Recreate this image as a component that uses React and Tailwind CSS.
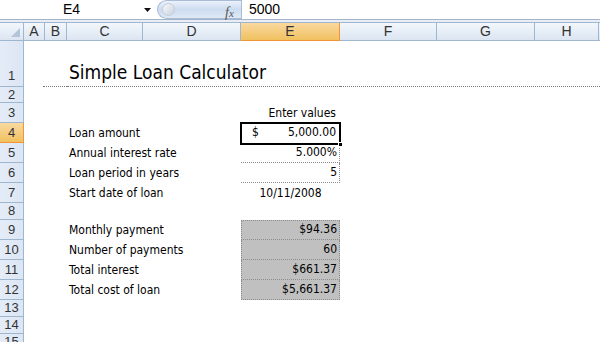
import React from 'react'

const cols = [
  { id: 'A', w: 'w-[21px]' },
  { id: 'B', w: 'w-[22px]' },
  { id: 'C', w: 'w-[76px]' },
  { id: 'D', w: 'w-[98px]' },
  { id: 'E', w: 'w-[99px]' },
  { id: 'F', w: 'w-[97px]' },
  { id: 'G', w: 'w-[98px]' },
  { id: 'H', w: 'w-[64px]' },
]

const rowHeights = {
  1: 'h-[46px]',
  2: 'h-[16px]',
  8: 'h-[17px]',
  13: 'h-[17px]',
  14: 'h-[17px]',
  15: 'h-[17px]',
}

const inputs = {
  4: { label: 'Loan amount' },
  5: { label: 'Annual interest rate', value: '5.000%' },
  6: { label: 'Loan period in years', value: '5' },
  7: { label: 'Start date of loan', value: '10/11/2008' },
  9: { label: 'Monthly payment', value: '$94.36' },
  10: { label: 'Number of payments', value: '60' },
  11: { label: 'Total interest', value: '$661.37' },
  12: { label: 'Total cost of loan', value: '$5,661.37' },
}

const cellFont = "font-['DejaVu_Sans_Condensed','DejaVu_Sans',sans-serif]"

function ValueCell({ row }) {
  const item = inputs[row]
  if (row === 3) {
    return (
      <div className="w-[99px] h-full flex items-end justify-end pr-[4px] pb-[1px] text-[12px]">
        Enter values
      </div>
    )
  }
  if (row === 4) {
    return (
      <div className="relative w-[99px] h-full">
        <div className="absolute left-[-1px] top-[-1px] right-[-1px] bottom-[-2px] border-2 border-black flex items-end justify-between px-[10px] pb-[2px] text-[12px] z-10">
          <span>$</span>
          <span className="-mr-[7px]">5,000.00</span>
        </div>
        <div className="absolute right-[-3px] bottom-[-4px] w-[5px] h-[5px] bg-black border border-white z-20" />
      </div>
    )
  }
  if (row === 5 || row === 6) {
    return (
      <div className="w-[99px] h-full flex items-end justify-end pr-[2px] pb-[1px] text-[12px] border-r border-b border-dotted border-[#8c8c8c]">
        {item.value}
      </div>
    )
  }
  if (row === 7) {
    return (
      <div className="w-[99px] h-full flex items-end justify-center pb-[1px] text-[12px]">
        {item.value}
      </div>
    )
  }
  if (row >= 9 && row <= 12) {
    return (
      <div
        className={`w-[99px] h-full flex items-end justify-end pr-[2px] pb-[1px] text-[12px] bg-[#c0c0c0] border-l border-r border-b border-dotted border-[#8c8c8c] ${
          row === 9 ? 'border-t' : ''
        }`}
      >
        {item.value}
      </div>
    )
  }
  return <div className="w-[99px] h-full" />
}

function Row({ n }) {
  const h = rowHeights[n] || 'h-[20px]'
  const selected = n === 4
  const item = inputs[n]
  return (
    <div className={`flex ${h}`}>
      <div
        className={`w-[24px] shrink-0 border-r border-b flex items-center justify-center text-[13px] font-['Liberation_Sans',sans-serif] ${
          selected
            ? 'bg-gradient-to-b from-[#f9d99f] to-[#f1c15f] border-[#f29536] text-[#333]'
            : 'bg-gradient-to-r from-[#e4ecf7] to-[#dce6f4] border-[#9eb6ce] text-[#333]'
        } ${n === 1 ? 'items-end pb-[1px]' : ''}`}
      >
        {n}
      </div>
      <div className={`flex ${cellFont} text-black`}>
        <div className="w-[43px] h-full flex flex-col justify-end">
          {n === 1 && <div className="ml-[19px] border-b border-dotted border-[#777]" />}
        </div>
        <div
          className={`w-[174px] h-full flex items-end pl-[2px] whitespace-nowrap ${
            n === 1 ? 'text-[19px] pb-0 border-b border-dotted border-[#777]' : 'text-[12px] pb-[1px]'
          }`}
        >
          {n === 1 ? 'Simple Loan Calculator' : item ? item.label : ''}
        </div>
        <div className={`h-full ${n === 1 ? 'border-b border-dotted border-[#777]' : ''}`}>
          {n === 1 ? <div className="w-[99px] h-full" /> : <ValueCell row={n} />}
        </div>
        <div
          className={`w-[400px] h-full ${n === 1 ? 'border-b border-dotted border-[#777]' : ''}`}
        />
      </div>
    </div>
  )
}

function FormulaBar() {
  return (
    <div className="flex h-[20px] bg-white border-b border-[#a5b4c8] font-['Liberation_Sans',sans-serif] text-[14px] text-black">
      <div className="w-[157px] flex items-center relative">
        <span className="ml-[63px]">E4</span>
        <svg className="absolute left-[144px] top-[8px]" width="8" height="5" viewBox="0 0 8 5">
          <path d="M0 0 L7 0 L3.5 4 Z" fill="#111" />
        </svg>
      </div>
      <div className="w-[84px] h-[19px] relative rounded-l-full bg-gradient-to-b from-[#eaf1fb] via-[#cddcf0] to-[#dfe9f6] border border-[#a9bcd6] border-r-0">
        <div className="absolute left-[4px] top-[2px] w-[13px] h-[13px] rounded-full bg-gradient-to-br from-[#f7f9fc] to-[#c9d3df] border border-[#c4ccd6]" />
        <span className="absolute left-[67px] top-[1px] font-['Liberation_Serif',serif] italic text-[14px] text-[#555]">
          f<span className="text-[11px]">x</span>
        </span>
      </div>
      <div className="flex-1 border-l border-[#a9bcd6] flex items-center pl-[7px]">5000</div>
    </div>
  )
}

function ColumnHeader() {
  return (
    <div className="flex h-[19px] border-t border-[#9eb6ce] font-['Liberation_Sans',sans-serif] text-[14px] text-[#333]">
      <div className="w-[24px] shrink-0 relative border-r border-b border-[#9eb6ce] bg-gradient-to-b from-[#f3f7fc] to-[#dbe5f1]">
        <svg className="absolute right-[3px] bottom-[3px]" width="9" height="9" viewBox="0 0 9 9">
          <path d="M9 0 L9 9 L0 9 Z" fill="#b4c5da" />
        </svg>
      </div>
      {cols.map((c) => (
        <div
          key={c.id}
          className={`${c.w} shrink-0 flex items-center justify-center border-r border-b ${
            c.id === 'E'
              ? 'bg-gradient-to-b from-[#f9d99f] to-[#f1c15f] border-[#f29536]'
              : 'bg-gradient-to-b from-[#f3f7fc] to-[#dbe5f1] border-[#9eb6ce]'
          }`}
        >
          {c.id}
        </div>
      ))}
      <div className="flex-1 border-b border-[#9eb6ce] bg-gradient-to-b from-[#f3f7fc] to-[#dbe5f1]" />
    </div>
  )
}

export default function App() {
  const rows = Array.from({ length: 15 }, (_, i) => i + 1)
  return (
    <div className="w-[600px] h-[342px] overflow-hidden bg-white">
      <FormulaBar />
      <div className="h-[2px] bg-[#e9eef6]" />
      <ColumnHeader />
      {rows.map((n) => (
        <Row key={n} n={n} />
      ))}
    </div>
  )
}
